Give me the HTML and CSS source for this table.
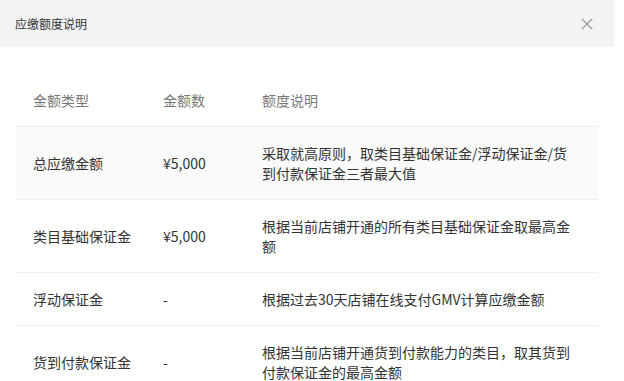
FILE: index.html
```html
<!DOCTYPE html>
<html lang="zh">
<head>
<meta charset="utf-8">
<link rel="stylesheet" href="styles.css">
</head>
<body>
<div class="modal">
  <div class="modal-head">
    <span class="modal-title">应缴额度说明</span>
    <svg class="close" width="12" height="12" viewBox="0 0 12 12"><path d="M1 1L11 11M11 1L1 11" stroke="#999" stroke-width="1.3" fill="none"/></svg>
  </div>
  <div class="modal-body">
    <table class="tbl">
      <colgroup><col class="c1"><col class="c2"><col class="c3"></colgroup>
      <thead>
        <tr><th>金额类型</th><th>金额数</th><th>额度说明</th></tr>
      </thead>
      <tbody>
        <tr class="hl"><td>总应缴金额</td><td>¥5,000</td><td>采取就高原则，取类目基础保证金/浮动保证金/货到付款保证金三者最大值</td></tr>
        <tr><td>类目基础保证金</td><td>¥5,000</td><td>根据当前店铺开通的所有类目基础保证金取最高金额</td></tr>
        <tr><td>浮动保证金</td><td>-</td><td>根据过去30天店铺在线支付GMV计算应缴金额</td></tr>
        <tr><td>货到付款保证金</td><td>-</td><td>根据当前店铺开通货到付款能力的类目，取其货到付款保证金的最高金额</td></tr>
      </tbody>
    </table>
  </div>
</div>
</body>
</html>
```

FILE: styles.css
```css
html, body {
  margin: 0;
  padding: 0;
  background: #fff;
}
body {
  font-family: "Noto Sans CJK SC", "Noto Sans", sans-serif;
  color: #333;
}
.modal {
  width: 614px;
  background: #fff;
}
.modal-head {
  height: 47px;
  background: #f2f3f5;
  display: flex;
  align-items: center;
  justify-content: space-between;
  padding: 0 21px 0 15px;
}
.modal-title {
  font-size: 12px;
  color: #333;
  line-height: 20px;
}
.close {
  display: block;
}
.modal-body {
  padding: 27px 16px 0 16px;
}
.tbl {
  width: 582px;
  border-collapse: collapse;
  table-layout: fixed;
  font-size: 14px;
  line-height: 20px;
}
.c1 { width: 130px; }
.c2 { width: 99px; }
.c3 { width: 353px; }
.tbl th,
.tbl td {
  text-align: left;
  padding: 16px 17px;
  border-bottom: 1px solid #eeeeee;
}
.tbl th {
  font-weight: normal;
  color: #777;
}
.tbl td {
  color: #333;
  vertical-align: middle;
}
.tbl th:first-child,
.tbl td:first-child {
  padding-right: 0;
}
.tbl th:last-child,
.tbl td:last-child {
  padding-right: 24px;
}
.tbl tr.hl td {
  background: #fafafa;
}
```
